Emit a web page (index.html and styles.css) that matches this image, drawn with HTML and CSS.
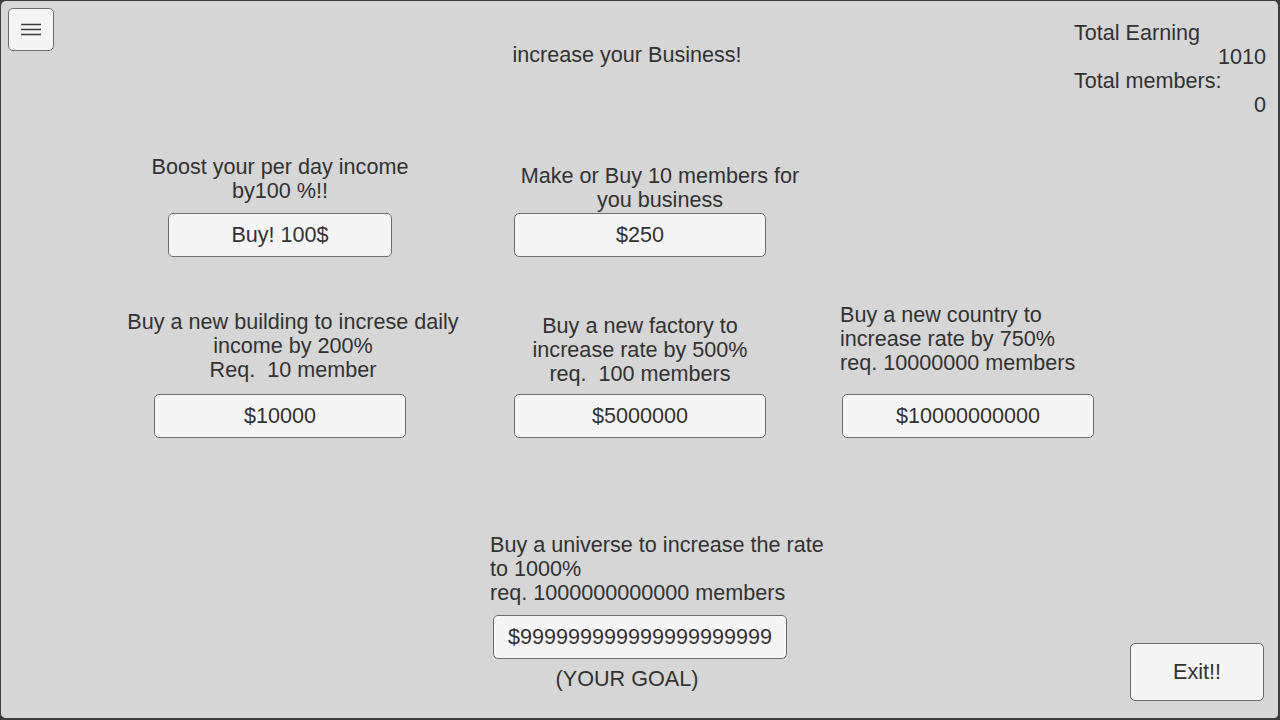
FILE: index.html
```html
<!DOCTYPE html>
<html lang="en">
<head>
<meta charset="utf-8">
<title>increase your Business!</title>
<link rel="stylesheet" href="styles.css">
</head>
<body>
<div class="screen">
  <header class="topbar">
    <div class="topbar-left">
      <button class="menu-btn" aria-label="Menu">
        <svg width="20" height="14" viewBox="0 0 20 14">
          <path d="M0 1.5H20M0 6.5H20M0 11.5H20" stroke="#3a3a3a" stroke-width="1.6" fill="none"/>
        </svg>
      </button>
    </div>
    <h1 class="title">increase your Business!</h1>
    <div class="stats">
      <div class="stat-label">Total Earning</div>
      <div class="stat-value">1010</div>
      <div class="stat-label">Total members:</div>
      <div class="stat-value">0</div>
    </div>
  </header>

  <main class="board">
    <div class="card card-a">
      <p class="desc">Boost your per day income<br>by100 %!!</p>
      <button class="btn btn-sm">Buy! 100$</button>
    </div>
    <div class="card card-b">
      <p class="desc">Make or Buy 10 members for<br>you business</p>
      <button class="btn">$250</button>
    </div>
    <div class="card card-empty"></div>

    <div class="card card-c">
      <p class="desc">Buy a new building to increse daily<br>income by 200%<br>Req.&nbsp; 10 member</p>
      <button class="btn">$10000</button>
    </div>
    <div class="card card-d">
      <p class="desc">Buy a new factory to<br>increase rate by 500%<br>req.&nbsp; 100 members</p>
      <button class="btn">$5000000</button>
    </div>
    <div class="card card-e">
      <p class="desc">Buy a new country to<br>increase rate by 750%<br>req. 10000000 members</p>
      <button class="btn">$10000000000</button>
    </div>
  </main>

  <footer class="footer">
    <div class="card card-f">
      <p class="desc">Buy a universe to increase the rate<br>to 1000%<br>req. 1000000000000 members</p>
      <button class="btn btn-wide">$999999999999999999999</button>
      <p class="goal">(YOUR GOAL)</p>
    </div>
    <button class="btn exit-btn">Exit!!</button>
  </footer>
</div>
</body>
</html>
```

FILE: styles.css
```css
* {
  box-sizing: border-box;
}

html, body {
  margin: 0;
  padding: 0;
  width: 1280px;
  height: 720px;
  overflow: hidden;
  background: #3c3c3c;
}

body {
  font-family: "Liberation Sans", Arial, sans-serif;
  font-size: 21.6px;
  line-height: 24px;
  color: #323232;
}

.screen {
  width: 1280px;
  height: 720px;
  background: #d6d6d6;
  border-right: 2px solid #3c3c3c;
  border-bottom: 2px solid #3c3c3c;
  border-left: 1px solid #3c3c3c;
  border-top: 1px solid #3c3c3c;
  border-radius: 6px;
  padding: 7px 12px 17px 7px;
  display: flex;
  flex-direction: column;
}

p, h1 {
  margin: 0;
  font-weight: normal;
}

/* top bar */
.topbar {
  display: grid;
  grid-template-columns: 1fr auto 1fr;
  align-items: start;
}

.menu-btn {
  width: 46px;
  height: 43px;
  padding: 0;
  background: #f5f5f5;
  border: 1px solid #6e6e6e;
  border-radius: 5px;
  display: flex;
  align-items: center;
  justify-content: center;
}

.title {
  font-size: 21.6px;
  line-height: 24px;
  margin-top: 35px;
  margin-right: 20px;
  color: #323232;
}

.stats {
  justify-self: end;
  width: 192px;
  padding-top: 13px;
}

.stat-value {
  text-align: right;
}

/* buy cards */
.board {
  margin-top: 38px;
  margin-left: 92px;
  display: grid;
  grid-template-columns: 360px 360px 296px;
  row-gap: 46px;
  align-items: end;
}

.card {
  display: flex;
  flex-direction: column;
  align-items: center;
}

.desc {
  text-align: center;
  white-space: nowrap;
}

.btn {
  font-family: "Liberation Sans", Arial, sans-serif;
  font-size: 21.6px;
  color: #323232;
  background: #f5f5f5;
  border: 1px solid #6e6e6e;
  border-radius: 5px;
  width: 252px;
  height: 44px;
  padding: 0;
  display: flex;
  align-items: center;
  justify-content: center;
  white-space: nowrap;
}

.btn-sm {
  width: 224px;
}

.card-a .desc {
  margin-bottom: 10px;
}

.card-b .desc {
  margin-bottom: 1px;
  padding-left: 40px;
}

.card-c .desc {
  margin-bottom: 12px;
  padding-left: 26px;
}

.card-d .desc {
  margin-bottom: 8px;
}

.card-e .desc {
  align-self: stretch;
  text-align: left;
  padding-left: 20px;
  margin-bottom: 19px;
}

/* footer */
.footer {
  margin-top: 95px;
  padding-left: 6px;
  display: grid;
  grid-template-columns: 1fr auto 1fr;
  align-items: end;
}

.card-f {
  grid-column: 2;
  width: 300px;
  margin-bottom: 10px;
}

.card-f .desc {
  align-self: stretch;
  text-align: left;
  margin-bottom: 10px;
}

.btn-wide {
  width: 294px;
}

.goal {
  margin-top: 8px;
  padding-right: 26px;
}

.exit-btn {
  grid-column: 3;
  justify-self: end;
  width: 134px;
  height: 58px;
  margin-right: 2px;
}
```
